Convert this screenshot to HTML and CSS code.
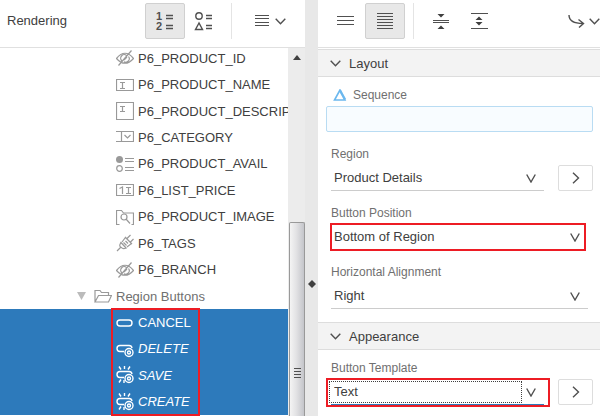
FILE: index.html
```
<!DOCTYPE html>
<html lang="en">
<head>
<meta charset="utf-8">
<title>Page Designer</title>
<link rel="stylesheet" href="styles.css">
</head>
<body>
<div class="designer">

<section class="pane tree-pane">
  <div class="toolbar">
    <h1 class="title">Rendering</h1>
    <button type="button" class="tool active" aria-label="Group by processing order">
      <svg width="20" height="20" viewBox="0 0 20 20"><text x="1" y="9" class="digit">1</text><text x="1" y="19" class="digit">2</text><path class="thick" d="M11 4.500h7M11 7.500h7M11 14.500h7M11 17.500h7"/></svg>
    </button>
    <button type="button" class="tool" aria-label="Group by component type">
      <svg width="20" height="20" viewBox="0 0 20 20"><circle cx="5" cy="5" r="3.200" class="thick"/><path class="thick" d="M5 12l-3.500 6.500h7zM12 4.500h6M12 7.500h6M12 14.500h6M12 17.500h6"/></svg>
    </button>
    <span class="sep"></span>
    <button type="button" class="tool menu" aria-label="Menu">
      <svg width="14" height="14" viewBox="0 0 14 14"><path d="M0 1.500h14M0 4.500h14M0 8.500h14M0 11.500h14"/></svg>
      <svg width="11" height="7" viewBox="0 0 11 7"><path class="thick" d="M.7 .7l4.800 5 4.800-5"/></svg>
    </button>
  </div>
  <div class="tree-body">
    <div class="tree">
      <ul class="items">
        <li><a href="#"><svg class="ico" viewBox="0 0 18 16"><path d="M.5 8.500Q9-2 17.500 8.500Q9 18 .5 8.500zM2.500 15.500L15.500 .5M6 11a3.500 3.500 0 0 1 4.500-5.500M12.500 6.500a3.500 3.500 0 0 1-4.500 5.200M8 10l3-3"/></svg>P6_PRODUCT_ID</a></li>
        <li><a href="#"><svg class="ico" viewBox="0 0 18 16"><path d="M.5 2.500h17v11H.5zM4 5.500h5M4 11.500h5M6.500 5.500v6"/></svg>P6_PRODUCT_NAME</a></li>
        <li><a href="#"><svg class="ico" viewBox="0 0 18 18"><path d="M.5 .5h17v17H.5zM4 4.500h5M4 9.500h5M6.500 4.500v5"/></svg>P6_PRODUCT_DESCRIPTION</a></li>
        <li><a href="#"><svg class="ico" viewBox="0 0 18 16"><path d="M0 2.500h17.500v10H0M5.500 2.500v10M8.500 6l3 3 3-3"/></svg>P6_CATEGORY</a></li>
        <li><a href="#"><svg class="ico" viewBox="0 0 18 16"><circle class="fill" cx="3.500" cy="3.500" r="3.500"/><circle cx="3.500" cy="12.500" r="2.800"/><path d="M9 2.500h9M9 5.500h9M9 11.500h9M9 14.500h9"/></svg>P6_PRODUCT_AVAIL</a></li>
        <li><a href="#"><svg class="ico" viewBox="0 0 18 16"><path d="M.5 2.500h17v11H.5zM10 5.500h5M10 11.500h5M12.500 5.500v6M3.500 6.500l3-1.500v7"/></svg>P6_LIST_PRICE</a></li>
        <li><a href="#"><svg class="ico" viewBox="0 0 18 18"><path d="M3.500 16.500h-3v-14h5l2 2.500h10v11.500h-2M14 15.500l-4-4.500"/><circle cx="8" cy="9" r="3"/></svg>P6_PRODUCT_IMAGE</a></li>
        <li><a href="#"><svg class="ico" viewBox="0 0 18 18"><path d="M1 17l4-4M4.500 8l6 6.500M5 8.500Q2.500 12 5 13.200Q7 15.500 10 14M6 8l3.500-4.500 6 6-4.500 3.500M9 3l7 7M10.500 5l4-4M14 8.500l3.500-3.500M7.500 8.500l3 3M9.500 7l2.500 2.500"/></svg>P6_TAGS</a></li>
        <li><a href="#"><svg class="ico" viewBox="0 0 18 16"><path d="M.5 8.500Q9-2 17.500 8.500Q9 18 .5 8.500zM2.500 15.500L15.500 .5M6 11a3.500 3.500 0 0 1 4.500-5.500M12.500 6.500a3.500 3.500 0 0 1-4.500 5.200M8 10l3-3"/></svg>P6_BRANCH</a></li>
      </ul>
      <a href="#" class="folder">
        <svg class="twisty" width="9" height="8" viewBox="0 0 9 8"><path d="M0 0h9L4.500 8z"/></svg>
        <svg class="ico" viewBox="0 0 18 14"><path d="M1 13V1.500h5l1.500 2h7v3M1 13l3.500-6.500h13L14.500 13z"/></svg>
        Region Buttons
      </a>
      <ul class="items selected">
        <li><a href="#"><svg class="ico" viewBox="0 0 18 18"><rect x="1" y="6" width="15" height="6" rx="3"/></svg>CANCEL</a></li>
        <li class="dynamic"><a href="#"><svg class="ico" viewBox="0 0 18 18"><path d="M8 11.500H4a3 3 0 0 1 0-6h9a3 3 0 0 1 3 2.500"/><circle cx="13" cy="12.500" r="4"/><circle cx="13" cy="12.500" r="1.500"/></svg>DELETE</a></li>
        <li class="dynamic"><a href="#"><svg class="ico" viewBox="0 0 18 18"><path d="M8 11.500H4a3 3 0 0 1 0-6h9a3 3 0 0 1 3 2.500M3 .5l2 3M8.500 0v3M14 .5l-2 3M5 13.500l-2 3M8 14v3"/><circle cx="13" cy="12.500" r="4"/><circle cx="13" cy="12.500" r="1.500"/></svg>SAVE</a></li>
        <li class="dynamic"><a href="#"><svg class="ico" viewBox="0 0 18 18"><path d="M8 11.500H4a3 3 0 0 1 0-6h9a3 3 0 0 1 3 2.500M3 .5l2 3M8.500 0v3M14 .5l-2 3M5 13.500l-2 3M8 14v3"/><circle cx="13" cy="12.500" r="4"/><circle cx="13" cy="12.500" r="1.500"/></svg>CREATE</a></li>
      </ul>
    </div>
    <div class="scrollbar">
      <svg class="scroll-up" width="8" height="5" viewBox="0 0 8 5"><path d="M0 5l4-5 4 5z"/></svg>
      <div class="thumb">
        <svg width="8" height="11" viewBox="0 0 8 11"><path d="M1 1.500h7M1 4.500h7M1 7.500h7M1 10.500h7"/></svg>
      </div>
    </div>
  </div>
</section>

<div class="splitter">
  <svg width="8" height="8" viewBox="0 0 8 8"><path d="M4 0l4 4-4 4-4-4z"/></svg>
</div>

<section class="pane props-pane">
  <div class="toolbar">
    <button type="button" class="tool" aria-label="Show common">
      <svg width="18" height="18" viewBox="0 0 18 18"><path d="M0 4.500h17M0 8.500h17M0 12.500h17"/></svg>
    </button>
    <button type="button" class="tool active" aria-label="Show all">
      <svg width="18" height="18" viewBox="0 0 18 18"><path d="M1 1.500h16M1 4.500h16M1 7.500h16M1 10.500h16M1 13.500h16M1 16.500h16"/></svg>
    </button>
    <span class="sep"></span>
    <button type="button" class="tool" aria-label="Collapse all">
      <svg width="18" height="18" viewBox="0 0 18 18"><path d="M1 8.500h16M1 10.500h16"/><path class="solid" d="M5.500 2h7L9 5.500zM5.500 17h7L9 13.500z"/></svg>
    </button>
    <button type="button" class="tool" aria-label="Expand all">
      <svg width="18" height="18" viewBox="0 0 18 18"><path d="M1 1.500h17M1 16.500h17"/><path class="solid" d="M5.500 8h7L9 4.500zM5.500 10h7L9 13.500z"/></svg>
    </button>
    <button type="button" class="tool goto" aria-label="Go to group">
      <svg width="17" height="14" viewBox="0 0 17 14"><path class="thick" d="M1 1Q1 9.500 15 9.500M10.500 5.500l5 4-4.500 4"/></svg>
      <svg width="11" height="7" viewBox="0 0 11 7"><path class="thick" d="M.7 .7l4.800 5 4.800-5"/></svg>
    </button>
  </div>

  <button type="button" class="group-head">
    <svg width="11" height="7" viewBox="0 0 11 7"><path d="M.7 .7l4.800 5 4.800-5"/></svg>Layout
  </button>
  <div class="group">
    <div class="field changed">
      <label for="sequence"><svg width="14" height="12" viewBox="0 0 14 12"><path d="M7 1L1.500 11h10.500z"/><path class="shade" d="M7 1.500l5 9"/></svg>Sequence</label>
      <input id="sequence" type="text">
    </div>
    <div class="field">
      <label for="region">Region</label>
      <div class="row">
        <div class="control">
          <select id="region"><option>Product Details</option></select>
          <svg class="caret" width="10" height="9" viewBox="0 0 10 9"><path d="M.7 .5L5 8 9.300 .5"/></svg>
        </div>
        <button type="button" class="go" aria-label="Go to region"><svg width="8" height="12" viewBox="0 0 8 12"><path d="M1 .7L6.500 6 1 11.300"/></svg></button>
      </div>
    </div>
    <div class="field">
      <label for="position">Button Position</label>
      <div class="control">
        <select id="position" class="plain"><option>Bottom of Region</option></select>
        <svg class="caret" width="10" height="9" viewBox="0 0 10 9"><path d="M.7 .5L5 8 9.300 .5"/></svg>
        <span class="mark"></span>
      </div>
    </div>
    <div class="field">
      <label for="alignment">Horizontal Alignment</label>
      <div class="control">
        <select id="alignment"><option>Right</option></select>
        <svg class="caret" width="10" height="9" viewBox="0 0 10 9"><path d="M.7 .5L5 8 9.300 .5"/></svg>
      </div>
    </div>
  </div>

  <button type="button" class="group-head">
    <svg width="11" height="7" viewBox="0 0 11 7"><path d="M.7 .7l4.800 5 4.800-5"/></svg>Appearance
  </button>
  <div class="group">
    <div class="field">
      <label for="template">Button Template</label>
      <div class="row">
        <div class="control focused">
          <select id="template"><option>Text</option></select>
          <svg class="caret" width="10" height="9" viewBox="0 0 10 9"><path d="M.7 .5L5 8 9.300 .5"/></svg>
          <span class="focus-ring"></span>
          <span class="mark wide"></span>
        </div>
        <button type="button" class="go" aria-label="Go to template"><svg width="8" height="12" viewBox="0 0 8 12"><path d="M1 .7L6.500 6 1 11.300"/></svg></button>
      </div>
    </div>
  </div>
</section>

</div>
</body>
</html>
```
FILE: styles.css
```
*, *::after {
  box-sizing: border-box;
}
body {
  margin: 0;
  font-family: "Liberation Sans", Arial, sans-serif;
  font-size: 13px;
  color: #404040;
  background-color: white;
}
button, select, input {
  font: inherit;
  color: inherit;
}
button {
  padding: 0;
  border: none;
  background: none;
}
svg {
  flex: none;
  fill: none;
  stroke: #505050;
}
.designer {
  display: flex;
  height: 100vh;
  overflow: hidden;
}
.pane {
  display: flex;
  flex-direction: column;
  min-width: 0;
}
.tree-pane {
  flex: 305;
}
.props-pane {
  flex: 282;
}

/* toolbars */
.toolbar {
  display: flex;
  flex: none;
  height: 48px;
  padding: 3px 5px 8px 7px;
  border-bottom: 1px solid #e0e0e0;
}
.title {
  flex: 1;
  margin: 0;
  font-size: 13px;
  font-weight: normal;
  line-height: 36px;
}
.tool {
  display: flex;
  align-items: center;
  justify-content: center;
  width: 38px;
  height: 36px;
}
.tool.active {
  width: 40px;
  border: 1px solid #d0d0d0;
  border-radius: 2px;
  background-color: #e8e8e8;
}
.tool.menu {
  gap: 6px;
  width: 60px;
}
.tool.goto {
  gap: 4px;
  width: 32px;
  margin-left: auto;
}
.thick {
  stroke-width: 1.4;
}
.solid {
  fill: #404040;
  stroke: none;
}
.digit {
  font-size: 11px;
  font-weight: bold;
  fill: #505050;
  stroke: none;
}
.sep {
  width: 1px;
  margin: 0 8px;
  background-color: #e4e4e4;
}
.props-pane .toolbar {
  margin-bottom: 1px;
  padding-left: 9px;
  padding-right: 0;
}

/* component tree */
.tree-body {
  display: flex;
  flex: 1;
  min-height: 0;
  overflow: hidden;
}
.tree {
  display: flex;
  flex: 1;
  flex-direction: column;
  min-width: 0;
  margin: -3px 0 1px;
}
.items {
  display: flex;
  flex: 9;
  flex-direction: column;
  margin: 0;
  padding: 0;
  list-style-type: none;
}
.items li {
  flex: 1;
  overflow: hidden;
}
.items a, .folder {
  display: flex;
  align-items: center;
  gap: 4px;
  height: 100%;
  padding-left: 116px;
  color: #404040;
  text-decoration: none;
  white-space: nowrap;
}
.folder {
  flex: 1;
  height: auto;
  padding-left: 77px;
  color: #707070;
}
.ico {
  width: 18px;
  height: 18px;
  stroke: #999;
  stroke-width: 1.2;
}
.ico .fill {
  fill: #999;
  stroke: none;
}
.twisty {
  margin-right: 4px;
  fill: #bbb;
  stroke: none;
}
.items.selected {
  position: relative;
  flex: 4;
  background-color: #2d7abb;
}
.selected::after {
  content: "";
  position: absolute;
  top: -1px;
  bottom: -1px;
  left: 111px;
  width: 89px;
  border: 2px solid #ed1c24;
  pointer-events: none;
}
.selected a {
  color: white;
}
.selected .ico {
  stroke: white;
  stroke-width: 1.4;
}
.dynamic {
  font-style: italic;
}
.scrollbar {
  display: flex;
  flex: none;
  flex-direction: column;
  align-items: center;
  width: 17px;
  padding-top: 7px;
  background-color: #ececec;
}
.scroll-up {
  fill: #404040;
  stroke: none;
}
.thumb {
  display: flex;
  flex: 1;
  align-items: center;
  justify-content: center;
  width: 16px;
  margin-top: 162px;
  padding-top: 106px;
  border: 1px solid #999;
  border-bottom: none;
  border-radius: 2px 2px 0 0;
  background: linear-gradient(to right, #f4f4f4, #e2e2e4 45%, #c4c5ca);
}
.splitter {
  display: flex;
  flex: none;
  align-items: center;
  justify-content: center;
  width: 13px;
  padding-top: 152px;
  background-color: #e8e8e8;
}
.splitter svg {
  fill: #404040;
  stroke: none;
}

/* property editor */
.group-head {
  display: flex;
  flex: none;
  align-items: center;
  gap: 8px;
  height: 28px;
  padding-left: 12px;
  border: solid #ddd;
  border-width: 1px 0;
  background-color: #f3f3f3;
}
.group-head path, .caret path, .go path {
  stroke-width: 1.4;
}
.group {
  display: flex;
  flex-direction: column;
  gap: 13px;
  padding: 9px 7px 13px 8px;
}
.field {
  display: flex;
  flex-direction: column;
  gap: 2px;
  padding: 0 5px;
}
.field label {
  display: flex;
  align-items: center;
  gap: 6px;
  font-size: 12px;
  line-height: 18px;
  color: #707070;
}
.changed {
  padding: 0;
}
.changed label {
  padding-left: 7px;
}
.changed label svg {
  stroke: #6cb8ee;
  stroke-width: 1.6;
}
.changed .shade {
  stroke-width: 2.4;
}
.changed input {
  width: 100%;
  height: 26px;
  padding: 0 4px;
  border: 1px solid #b9dcf3;
  border-radius: 2px;
  background-color: #f8fcff;
}
.row {
  display: flex;
  gap: 14px;
  margin-right: -5px;
}
.control {
  position: relative;
  flex: 1;
}
.control select {
  display: block;
  appearance: none;
  width: 100%;
  height: 26px;
  padding: 0 24px 0 3px;
  border: none;
  border-bottom: 1px solid #ccc;
  border-radius: 0;
  background: none;
}
.control select.plain {
  border-color: transparent;
}
.control.focused select {
  border-color: #2d7abb;
}
.caret {
  position: absolute;
  top: 9px;
  right: 8px;
  pointer-events: none;
}
.focus-ring {
  position: absolute;
  inset: 2px 22px 2px -2px;
  border: 1px dotted #404040;
  pointer-events: none;
}
.mark {
  position: absolute;
  inset: -1px 2px -1px -1px;
  border: 2px solid #ed1c24;
  pointer-events: none;
}
.mark.wide {
  inset: -1px -6px -2px -5px;
}
.go {
  display: flex;
  align-items: center;
  justify-content: center;
  width: 35px;
  height: 26px;
  border: 1px solid #ddd;
  border-radius: 2px;
}
```
